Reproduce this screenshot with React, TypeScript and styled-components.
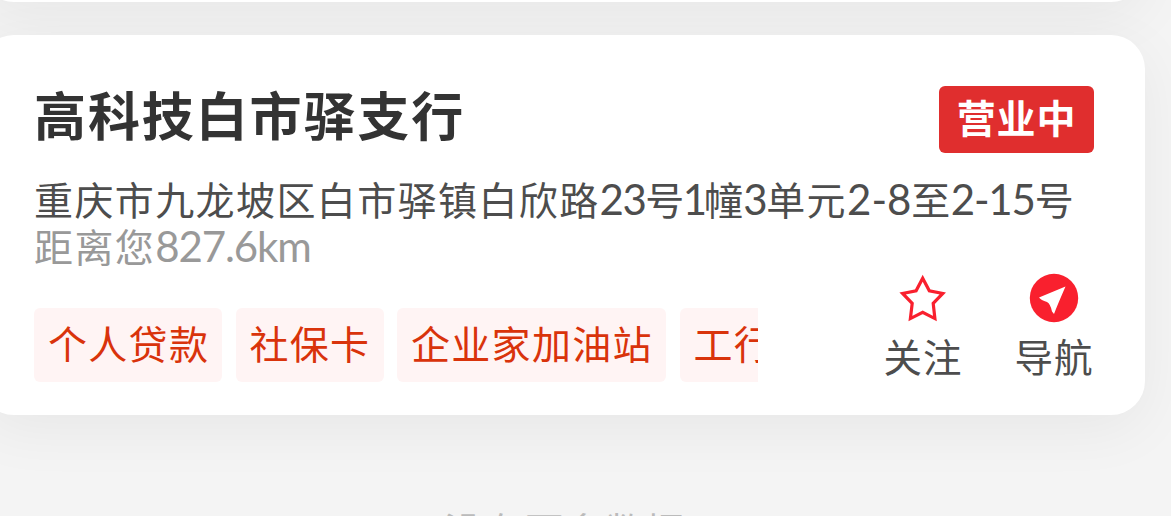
import styled, { createGlobalStyle, css } from 'styled-components'

const GlobalStyle = createGlobalStyle`
  * {
    box-sizing: border-box;
  }

  body {
    margin: 0;
    height: 516px;
    overflow: hidden;
    background: #f4f4f4;
    font-family: 'Noto Sans CJK SC', sans-serif;
  }
`

const Page = styled.main`
  height: 516px;
  overflow: hidden;
  display: flex;
  flex-direction: column;
`

const cardSurface = css`
  width: 1165px;
  margin-left: -20px;
  flex: none;
  background: #fff;
  border-radius: 34px;
  box-shadow: 0 14px 60px rgba(0, 0, 0, 0.056);
`

const PreviousCard = styled.div`
  ${cardSurface}
  height: 380px;
  margin-top: -378px;
`

const BranchCard = styled.article`
  ${cardSurface}
  height: 380px;
  margin-top: 33px;
  padding: 51px 51px 0 54px;
`

const Header = styled.header`
  display: flex;
  justify-content: space-between;
  height: 67px;
`

const BranchName = styled.h2`
  margin: 0;
  color: #333;
  font-size: 52px;
  font-weight: 700;
  line-height: 56px;
  letter-spacing: 1.9px;
  white-space: nowrap;
`

const Status = styled.span`
  width: 155px;
  height: 67px;
  border-radius: 6px;
  background: #e02e2e;
  color: #fff;
  font-size: 39px;
  font-weight: 700;
  line-height: 60px;
  letter-spacing: 0.8px;
  text-align: center;
`

const Line = styled.p<{ $muted?: boolean }>`
  margin: 0;
  height: 47px;
  color: ${({ $muted }) => ($muted ? '#999' : '#4d4d4d')};
  font-size: 39px;
  line-height: 47px;
  letter-spacing: 1.4px;
  white-space: nowrap;
`

const Address = styled(Line)`
  margin-top: 22px;
`

const Latin = styled.span<{ $tracking?: number; $shift?: number }>`
  margin-left: ${({ $shift = 0 }) => $shift}px;
  font-family: Lato, sans-serif;
  font-size: 42px;
  line-height: 1;
  letter-spacing: ${({ $tracking = -1.5 }) => $tracking}px;
`

const Footer = styled.div`
  display: flex;
  justify-content: space-between;
`

const Tags = styled.div`
  display: flex;
  gap: 13.5px;
  width: 724px;
  height: 74px;
  margin-top: 39px;
  overflow: hidden;
`

const Tag = styled.span<{ $width: number }>`
  flex: none;
  width: ${({ $width }) => $width}px;
  padding-left: 14px;
  border-radius: 6px;
  background: #fff4f4;
  color: #d9330b;
  font-size: 39px;
  line-height: 68px;
  letter-spacing: 1.3px;
  white-space: nowrap;
`

const Actions = styled.div`
  display: flex;
  gap: 51px;
  margin-top: 4px;
`

const Action = styled.button`
  display: flex;
  flex-direction: column;
  align-items: center;
  justify-content: flex-start;
  width: 80px;
  padding: 0;
  border: 0;
  background: none;
  color: #4d4d4d;
  font-family: inherit;
  font-size: 38.5px;
  line-height: 46px;
  letter-spacing: 1px;

  svg {
    display: block;
    margin-bottom: 9px;
  }
`

const EndNote = styled.p`
  margin: 86px 0 0;
  padding-right: 41px;
  flex: none;
  color: #bbb;
  font-size: 39px;
  line-height: 56px;
  letter-spacing: 1.3px;
  text-align: center;
`

const StarIcon = () => (
  <svg width="50" height="50" viewBox="0 0 50 50">
    <path
      d="M24.7 5.2L31.3 17.8L44.8 20.4L35.2 30.4L36.9 45.6L24.7 39.4L12.4 45.6L14.2 30.4L4.6 20.4L18.1 17.8Z"
      fill="none"
      stroke="#f9202e"
      strokeWidth="3.2"
    />
  </svg>
)

const NavigateIcon = () => (
  <svg width="50" height="50" viewBox="0 0 50 50">
    <circle cx="25" cy="25" r="24.2" fill="#f9202e" />
    <path d="M36.5 13.5L10 24.5Q12 27 18 29Q21.5 31 23 38.5L25 41Q28 33 36.5 13.5Z" fill="#fff" />
  </svg>
)

const tags = [
  { label: '个人贷款', width: 188 },
  { label: '社保卡', width: 148 },
  { label: '企业家加油站', width: 269 },
  { label: '工行', width: 108 },
]

export default function App() {
  return (
    <>
      <GlobalStyle />
      <Page>
        <PreviousCard />
        <BranchCard>
          <Header>
            <BranchName>高科技白市驿支行</BranchName>
            <Status>营业中</Status>
          </Header>
          <Address>
            重庆市九龙坡区白市驿镇白欣路<Latin>23</Latin>号<Latin $tracking={-3.2} $shift={-3}>1</Latin>幢
            <Latin $tracking={-1.5} $shift={-1}>3</Latin>单元<Latin $tracking={0}>2-8</Latin>至
            <Latin $tracking={-1.2} $shift={-1}>2-15</Latin>号
          </Address>
          <Line $muted>
            距离您<Latin $tracking={-1.1}>827.6km</Latin>
          </Line>
          <Footer>
            <Tags>
              {tags.map(({ label, width }) => (
                <Tag key={label} $width={width}>{label}</Tag>
              ))}
            </Tags>
            <Actions>
              <Action>
                <StarIcon />
                关注
              </Action>
              <Action>
                <NavigateIcon />
                导航
              </Action>
            </Actions>
          </Footer>
        </BranchCard>
        <EndNote>没有更多数据</EndNote>
      </Page>
    </>
  )
}
